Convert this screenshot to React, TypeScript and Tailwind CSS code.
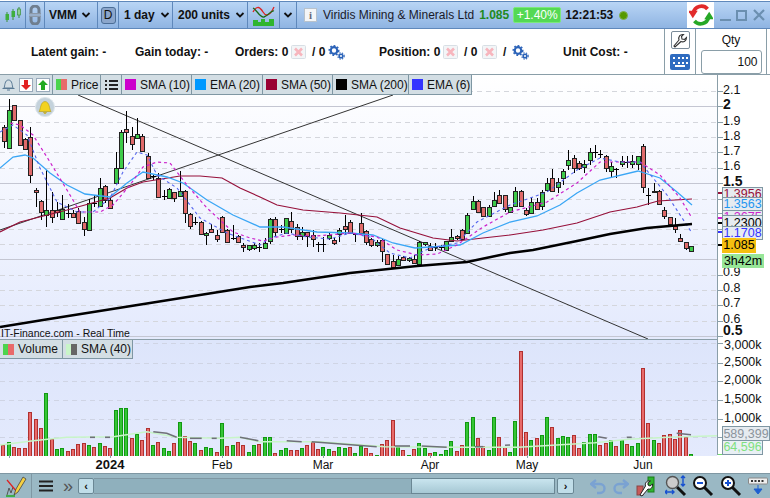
import React from "react";

type C = [number, number, number, number, number, number];
const g1: C[] = [[13,90,160,95,138,0],[28,13,160,45,160,1],[43,30,75,30,75,0],[61,75,150,75,150,0],[76,130,165,133,163,0],[91,95,265,127,240,0],[109,278,335,286,292,0],[124,315,375,317,352,0],[139,225,395,344,360,1],[156,290,385,345,365,0],[172,320,365,345,352,0],[187,300,375,343,373,1],[205,328,370,355,355,2],[220,345,370,355,365,0],[235,340,385,348,383,0],[252,365,422,382,403,0],[268,312,407,323,406,1],[283,300,335,325,325,2],[301,248,335,278,333,1],[316,270,325,274,315,0],[331,310,340,315,340,0],[349,172,265,218,265,1],[364,105,220,112,220,1],[379,48,145,103,112,0],[397,95,165,122,148,0],[412,70,128,118,128,1],[427,118,170,122,168,0],[445,175,250,182,250,0],[460,240,255,243,243,2],[475,235,305,250,305,0],[493,285,315,303,303,2],[508,280,310,283,308,1],[523,290,320,292,310,0],[541,228,305,287,304,1],[556,285,383,287,355,0],[571,355,403,358,394,0],[586,365,390,380,380,2],[604,378,420,382,418,0],[619,410,450,415,421,1],[634,388,415,403,410,0],[652,405,440,421,431,0],[667,363,410,365,412,0],[682,403,443,404,442,0],[700,390,435,428,428,2],[715,420,445,424,440,0],[730,445,470,451,457,0],[748,450,468,451,457,1]];
const g2: C[] = [[-2,345,362,346,356,1],[13,340,360,344,355,1],[28,340,365,350,350,2],[46,325,357,338,355,1],[61,265,342,268,332,1],[76,262,320,266,305,0],[94,285,310,297,297,2],[109,263,310,265,308,1],[124,246,310,273,298,0],[142,282,330,292,317,0],[157,290,330,307,317,1],[172,305,350,307,318,0],[190,300,352,316,328,0],[205,335,365,342,342,2],[220,320,365,341,341,2],[238,305,330,316,325,1],[253,325,345,331,340,0],[268,295,335,301,313,1],[286,254,315,287,296,0],[301,270,310,277,308,0],[316,310,335,312,312,2],[334,250,310,280,308,0],[349,300,345,302,337,0],[364,325,350,328,344,0],[382,330,352,337,346,1],[397,328,395,329,364,0],[412,373,403,373,403,0],[430,375,413,392,412,0],[445,378,405,388,406,1],[460,378,392,380,390,0],[478,380,395,385,390,1],[493,375,400,388,398,0],[508,333,405,335,403,1],[526,335,347,335,343,1],[541,340,362,347,360,0],[556,340,362,352,352,2],[574,345,360,352,352,2],[589,333,362,334,361,1],[604,298,335,320,332,1],[622,315,330,317,325,0],[637,297,330,301,328,0],[652,250,310,256,310,1],[670,197,240,214,238,1],[685,210,247,212,245,0],[700,230,258,230,257,0],[718,225,258,230,257,1],[733,185,232,211,229,1],[748,180,220,196,218,0],[766,195,245,196,238,0]];
const g3: C[] = [[0,335,355,335,352,1],[16,275,335,287,333,1],[34,285,335,287,333,0],[49,340,362,344,356,0],[64,310,358,322,355,1],[82,310,345,322,343,0],[97,285,345,290,333,1],[112,250,290,263,285,1],[127,222,290,248,288,0],[145,250,295,260,277,1],[160,222,270,227,248,1],[175,165,225,195,209,1],[193,180,235,190,220,0],[208,197,225,203,219,0],[223,195,233,206,217,1],[241,160,210,170,196,1],[256,150,190,172,172,2],[271,165,190,178,178,2],[289,180,230,182,220,0],[304,200,250,214,228,1],[319,220,250,222,222,2],[337,182,215,197,208,1],[352,182,220,202,202,2],[367,180,220,197,207,1],[385,182,225,184,208,1],[400,148,295,154,276,0],[415,280,330,300,300,2],[433,265,295,287,292,0],[448,285,330,287,328,0],[463,335,372,344,364,0],[481,365,388,365,386,0],[496,370,415,392,403,0],[511,418,442,430,439,0],[529,442,465,442,458,0],[544,453,470,454,468,1]];
const candles = [
  ...g1.map((c) => ({ x: c[0] / 3, c, ox: 95 })),
  ...g2.map((c) => ({ x: 250 + c[0] / 3, c, ox: 130 })),
  ...g3.map((c) => ({ x: 510 + c[0] / 3, c, ox: 95 })),
];
const v1: [number, number, number][] = [[10,375,0],[27,367,1],[42,380,0],[58,385,0],[74,385,0],[90,277,0],[107,297,0],[122,325,0],[138,220,1],[155,358,0],[170,388,1],[186,385,1],[203,393,0],[219,388,0],[234,373,0],[251,370,0],[266,376,1],[282,382,0],[300,370,1],[315,378,0],[330,385,0],[348,271,1],[363,265,1],[378,265,1],[395,355,0],[411,343,1],[426,360,0],[443,325,0],[459,376,1],[474,367,0],[491,385,1],[506,393,1],[522,370,0],[539,307,1],[554,349,0],[570,363,0],[585,370,1],[603,390,0],[618,382,1],[633,385,1],[651,396,0],[666,310,1],[681,378,0],[698,376,1],[714,367,0],[729,376,0],[746,397,1],[762,376,1],[777,373,0],[795,352,1],[810,352,1],[825,400,0],[843,391,1],[858,385,1],[873,391,0],[890,391,0],[905,385,1],[921,376,0],[938,367,0],[953,388,0],[969,382,1],[986,388,1],[1001,394,0],[1017,382,1],[1035,385,1],[1050,382,0],[1065,400,1],[1083,378,1],[1098,385,0],[1113,400,0],[1130,406,1],[1146,373,0],[1160,360,0],[1179,300,0],[1193,380,1],[1209,391,0],[1226,406,1],[1242,388,0],[1257,370,1],[1275,385,1],[1290,400,0],[1305,397,1],[1323,403,1],[1338,391,1],[1353,364,1],[1371,394,0],[1386,376,0],[1401,307,1],[1419,292,1],[1434,355,0],[1449,379,0],[1467,391,1],[1482,292,1],[1497,352,0],[1515,382,0],[1530,397,1],[1545,304,1],[1563,94,0],[1578,337,0],[1593,361,1],[1611,355,0],[1626,346,1],[1641,292,1],[1656,322,0],[1674,355,1],[1689,349,1],[1704,352,1],[1722,346,0],[1737,385,0],[1752,367,1],[1770,343,1],[1785,343,1],[1800,376,0],[1818,370,0],[1833,361,1],[1848,379,0],[1866,361,1],[1881,373,0],[1896,379,1],[1914,370,1],[1929,145,0],[1944,310,0],[1962,361,1],[1977,370,0],[1992,346,0],[2010,343,0],[2025,358,0],[2040,331,0],[2058,352,0],[2073,403,1]];

const ema20 = "0,168 13,157 25,155 33,158 50,173 67,185 85,194 110,197 127,183 143,172 167,177 183,183 207,200 233,215 260,227 283,227 317,232 350,233 373,235 393,243 415,248 430,247 460,245 483,233 510,222 537,216 560,205 577,193 600,180 638,171 660,178 677,192 692,205";
const sma50 = "0,232 20,222 67,210 110,198 127,188 143,182 180,176 200,176 222,178 240,188 260,197 277,205 303,210 340,213 377,217 400,228 433,238 457,241 483,238 510,235 543,230 577,223 610,212 637,207 658,201 692,199";
const sma200 = "0,327 43,320 150,303 250,287 283,283 350,273 417,266 467,262 510,253 533,250 577,241 610,234 647,228 692,224";
const sma10 = "10,123 20,125 33,135 50,162 70,195 80,212 100,212 113,205 130,185 143,167 157,162 170,163 187,185 207,208 233,232 250,238 263,241 277,237 293,235 317,236 350,233 377,237 397,250 417,255 437,254 457,245 483,227 510,212 547,202 577,183 600,162 620,162 640,162 660,175 680,198 692,218";
const ema6 = "0,132 13,125 27,135 40,168 57,202 77,212 93,212 110,198 123,172 137,152 147,155 157,175 177,188 200,218 227,233 260,245 270,238 287,233 307,237 330,239 350,233 370,237 390,253 410,258 430,248 457,243 477,222 510,205 547,192 577,170 600,158 620,162 640,162 667,195 692,233";

const toV = (a: number[][]) => a.map(([x, y]) => `${(x / 3).toFixed(1)},${(320 + y / 3).toFixed(1)}`).join(" ");
const volMa = toV([[0,375],[100,362],[200,352],[340,350],[440,335],[530,352],[660,355],[720,352],[780,365],[960,365],[1155,380],[1385,382],[1555,382],[1785,368],[1885,358],[2005,352],[2155,347],[2285,340],[2303,344]]);
const volGray = [[[270,352],[285,352]],[[315,352],[330,352]],[[460,335],[500,340],[530,352]],[[570,355],[605,355]],[[635,355],[650,355]],[[720,352],[775,362]],[[860,362],[905,365]],[[935,365],[1130,380]],[[1185,378],[1230,378]],[[1265,378],[1340,382]],[[1425,380],[1450,380]],[[1515,376],[1530,375]],[[1795,350],[1820,355]],[[1880,352],[1895,352]],[[2030,340],[2073,344]]];

const priceAxis: [string, number, boolean][] = [["2.1",90,false],["2",104,true],["1.9",121,false],["1.8",136,false],["1.7",151,false],["1.6",166,false],["1.5",181,true],["0.9",272,false],["0.8",288,false],["0.7",303,false],["0.6",319,false],["0.5",330,true]];
const priceTicks = [91,106,122,137,152,168,183,199,213,229,244,275,290,305,321,336];
const volAxis: [string, number][] = [["3,000k",345],["2,500k",362],["2,000k",380],["1,500k",399],["1,000k",418]];
const volTicks = [343,363,381,400,419,437];
const months: [string, number, boolean][] = [["2024",110,true],["Feb",222,false],["Mar",323,false],["Apr",430,false],["May",527,false],["Jun",643,false]];

const tag = "absolute left-[4px] bg-[#e6ebf0] border border-[#7f97a3] text-[12.5px] leading-[13px] text-center overflow-hidden";

function Chev() {
  return <svg width="10" height="8" viewBox="0 0 10 8"><path d="M1.5 2 5 5.5 8.5 2" fill="none" stroke="#111" strokeWidth="1.8" /></svg>;
}
function Gears() {
  return (
    <svg width="17" height="15" viewBox="0 0 17 15" className="shrink-0">
      <circle cx="6" cy="5.5" r="3.3" fill="none" stroke="#2a62b8" strokeWidth="2.2" />
      <circle cx="6" cy="5.5" r="4.8" fill="none" stroke="#2a62b8" strokeWidth="1.4" strokeDasharray="1.8 1.8" />
      <circle cx="13" cy="11" r="1.8" fill="none" stroke="#2a62b8" strokeWidth="1.6" />
      <circle cx="13" cy="11" r="3.2" fill="none" stroke="#2a62b8" strokeWidth="1.1" strokeDasharray="1.3 1.3" />
    </svg>
  );
}
function DocX() {
  return (
    <svg width="15" height="14" viewBox="0 0 15 14" className="shrink-0">
      <rect x="0.5" y="0.5" width="14" height="13" rx="1" fill="#f3f5f7" stroke="#d8dfe5" />
      <path d="M4 3.5 11 10.5M11 3.5 4 10.5" stroke="#f7b5bd" strokeWidth="2.6" />
    </svg>
  );
}
function Sep() {
  return <div className="w-px h-full bg-[#5f88bb] shrink-0" />;
}
function Swatch({ c }: { c: string }) {
  return <span className={`w-[11px] h-[11px] shrink-0 ${c}`} />;
}
function Chip({ color, label, w }: { color: string; label: string; w: string }) {
  return (
    <div className={`flex items-center gap-[4px] pl-[3px] h-full whitespace-nowrap border-r border-[#7f97a3] ${w}`}>
      <Swatch c={color} />
      <span>{label}</span>
    </div>
  );
}
function Mag({ children }: { children?: React.ReactNode }) {
  return (
    <svg width="22" height="22" viewBox="0 0 22 22" className="shrink-0">
      <path d="M12 12 20 20" stroke="#111" strokeWidth="3" />
      <circle cx="8" cy="8" r="6" fill="#fff" stroke="#111" strokeWidth="2" />
      {children}
    </svg>
  );
}

export default function App() {
  return (
    <div className="w-[770px] h-[498px] overflow-hidden bg-white flex flex-col text-[12px] text-[#111] [font-family:'Liberation_Sans',sans-serif]">
      <div className="h-[1px] shrink-0 bg-white" />
      {/* Title bar */}
      <div className="h-[28px] shrink-0 flex items-center bg-linear-to-b from-[#b9d5f5] to-[#8fb4e2] border-y border-[#5f88bb]">
        <div className="w-[25px] flex justify-center shrink-0">
          <svg width="18" height="18" viewBox="0 0 18 18">
            <path d="M3 6V16M9 3V14M15 1V12" stroke="#3a8f3a" strokeWidth="1" />
            <rect x="1.5" y="8" width="3.5" height="6" fill="#3fae3f" />
            <rect x="7.5" y="5" width="3.5" height="6" fill="#3fae3f" />
            <rect x="13.5" y="3" width="3" height="6" fill="#8fd08f" stroke="#3a8f3a" strokeWidth=".7" />
          </svg>
        </div>
        <Sep />
        <div className="w-[18px] flex justify-center shrink-0">
          <svg width="12" height="20" viewBox="0 0 12 20">
            <path d="M2 8V5a4 4 0 0 1 8 0v3" fill="none" stroke="#6f7e8f" strokeWidth="3" />
            <path d="M2 12v3a4 4 0 0 0 8 0v-3" fill="none" stroke="#6f7e8f" strokeWidth="3" />
            <rect x="0" y="8" width="12" height="1.5" fill="#8b98a8" />
            <rect x="0" y="10.5" width="12" height="1.5" fill="#8b98a8" />
          </svg>
        </div>
        <Sep />
        <div className="w-[52px] flex items-center gap-[4px] pl-[4px] font-bold shrink-0">VMM <Chev /></div>
        <Sep />
        <div className="w-[20px] flex justify-center shrink-0">
          <div className="w-[15px] h-[17px] rounded-[3px] bg-[#8ba6cb] border border-[#4b6d96] flex items-center justify-center text-[12px] leading-none">D</div>
        </div>
        <Sep />
        <div className="w-[53px] flex items-center gap-[5px] pl-[5px] font-bold shrink-0">1 day <Chev /></div>
        <Sep />
        <div className="w-[74px] flex items-center gap-[5px] pl-[5px] font-bold shrink-0">200 units <Chev /></div>
        <Sep />
        <div className="w-[31px] flex justify-center shrink-0">
          <svg width="23" height="22" viewBox="0 0 23 22">
            <path d="M1 8C5 1 8 3 11 8S18 12 22 3" fill="none" stroke="#d22" strokeWidth="1.3" />
            <path d="M1 4C5 6 8 14 12 13S19 6 22 7" fill="none" stroke="#196b19" strokeWidth="1.3" />
            <path d="M1 22V16H6V18H9V15H13V18H17V15H22V22Z" fill="#2fb52f" />
          </svg>
        </div>
        <Sep />
        <div className="w-[16px] flex justify-center shrink-0"><Chev /></div>
        <Sep />
        <div className="flex items-center pl-[7px] w-[390px] shrink-0">
          <div className="w-[13px] h-[14px] bg-[#f4f6f8] border border-[#b8c2cc] flex items-center justify-center text-[11px] font-bold text-[#667] leading-none [font-family:'Liberation_Serif',serif] shrink-0">i</div>
          <span className="ml-[6px] text-[#1a1a2a]">Viridis Mining &amp; Minerals Ltd</span>
          <span className="ml-[5px] font-bold text-[#1f8a1f]">1.085</span>
          <span className="ml-[4px] w-[48px] h-[16px] rounded-[2px] bg-[#54d954] border border-[#7ce87c] text-white flex items-center justify-center leading-none">+1.40%</span>
          <span className="ml-[4px] font-bold">12:21:53</span>
          <span className="ml-[6px] w-[9px] h-[9px] rounded-full bg-[#559900] border border-[#80b050]" />
        </div>
        <div className="w-[27px] h-full bg-white flex items-center justify-center shrink-0 ml-auto">
          <svg width="24" height="24" viewBox="0 0 22 22">
            <path d="M17 5.5A7.5 7.5 0 0 0 4 9" fill="none" stroke="#e22b2b" strokeWidth="3.4" />
            <path d="M-1 7H8L3.5 14Z" fill="#e22b2b" />
            <path d="M5 16.5A7.5 7.5 0 0 0 18 13" fill="none" stroke="#26a826" strokeWidth="3.4" />
            <path d="M14 15H23L18.5 8Z" fill="#26a826" />
          </svg>
        </div>
        <div className="w-[57px] flex items-center justify-around px-[3px] shrink-0">
          <div className="w-[11px] h-[2px] bg-[#6b8fb0] mt-[10px]" />
          <div className="w-[11px] h-[11px] border-2 border-[#6b8fb0]" />
          <svg width="12" height="12" viewBox="0 0 12 12"><path d="M1 1 11 11M11 1 1 11" stroke="#6b8fb0" strokeWidth="2.2" /></svg>
        </div>
      </div>

      {/* Info row */}
      <div className="h-[46px] shrink-0 flex border-b border-[#8a9ea8] font-bold">
        <div className="w-[664px] shrink-0 flex items-center pl-[31px] whitespace-nowrap pt-[1px]">
          <span className="w-[104px]">Latent gain: -</span>
          <span className="w-[100px]">Gain today: -</span>
          <span className="w-[56px]">Orders: 0</span>
          <DocX />
          <span className="ml-[6px] w-[16px]">/ 0</span>
          <Gears />
          <span className="ml-[34px] w-[64px]">Position: 0</span>
          <DocX />
          <span className="ml-[6px] w-[18px]">/ 0</span>
          <DocX />
          <span className="ml-[6px] w-[9px]">/</span>
          <Gears />
          <span className="ml-[34px]">Unit Cost: -</span>
        </div>
        <div className="w-[32px] shrink-0 border-x border-[#8a9ea8] flex flex-col items-center gap-[5px] pt-[2px]">
          <div className="w-[19px] h-[18px] rounded-[2px] border border-[#7a8a98] flex items-center justify-center">
            <svg width="15" height="15" viewBox="0 0 15 15"><path d="M1 13 2 14 8 8.5C10.5 9.5 13.5 8 13.5 4.5L11.5 6.5 9 6 8.5 3.5 10.5 1.5C7 1 5 4 6 7Z" fill="#fff" stroke="#333" strokeWidth="1.1" /></svg>
          </div>
          <div className="w-[20px] h-[16px] rounded-[2px] bg-[#2f6cc0] flex flex-col items-center justify-center gap-[1px]">
            <div className="w-[15px] h-[7px] border-t-2 border-b-2 border-dotted border-white" />
            <div className="w-[10px] h-[2px] bg-white" />
          </div>
        </div>
        <div className="w-[71px] shrink-0 border-r border-[#8a9ea8] flex flex-col items-center font-normal">
          <div className="h-[21px] flex items-center">Qty</div>
          <div className="w-[61px] h-[24px] rounded-[3px] border border-[#8a9ea8] flex items-center justify-end pr-[3px]">100</div>
        </div>
      </div>

      {/* Chart */}
      <div className="flex shrink-0 h-[380px]">
        <div className="w-[717px] shrink-0 flex flex-col border-r border-[#8a9ea8] box-content">
          <div className="relative h-[264px] shrink-0 border-b border-[#8a9ea8] box-content bg-linear-to-b from-white to-[#e4eafd]">
            <svg width="717" height="264" viewBox="0 75 717 264" className="block">
              {[91,122,137,152,168,199,213,229,244,275,290,305,321].map((y) => (
                <line key={y} x1="0" x2="717" y1={y + 0.5} y2={y + 0.5} stroke="#d4d6dc" strokeDasharray="5 4" />
              ))}
              {[106,183,259,336].map((y) => (
                <line key={y} x1="0" x2="717" y1={y + 0.5} y2={y + 0.5} stroke="#c4c6d2" />
              ))}
              <line x1="78" y1="95" x2="648" y2="339" stroke="#333" strokeWidth="1" />
              <line x1="0" y1="230" x2="393" y2="95" stroke="#333" strokeWidth="1" />
              <g shapeRendering="crispEdges">
                {candles.map(({ x, c, ox }, i) => {
                  const px = Math.round(x);
                  const yy = (v: number) => Math.round(ox + v / 3);
                  const t = yy(c[3]);
                  const b = yy(c[4]);
                  return (
                    <g key={i}>
                      <line x1={px + 0.5} x2={px + 0.5} y1={yy(c[1])} y2={yy(c[2])} stroke="#000" />
                      {c[5] === 2 ? (
                        <line x1={px - 2} x2={px + 3} y1={t + 0.5} y2={t + 0.5} stroke="#000" />
                      ) : (
                        <rect x={px - 1.5} y={t + 0.5} width="4" height={Math.max(b - t, 1)} fill={c[5] ? "#3ecb4a" : "#e06a6a"} stroke="#222" />
                      )}
                    </g>
                  );
                })}
              </g>
              <polyline points={sma50} fill="none" stroke="#96103a" strokeWidth="1.2" />
              <polyline points={ema20} fill="none" stroke="#3aa6f5" strokeWidth="1.3" />
              <polyline points={sma10} fill="none" stroke="#cc22cc" strokeWidth="1.2" strokeDasharray="3 3" />
              <polyline points={ema6} fill="none" stroke="#5566ee" strokeWidth="1.1" strokeDasharray="3 3" />
              <polyline points={sma200} fill="none" stroke="#000" strokeWidth="2.6" />
            </svg>
            {/* Legend */}
            <div className="absolute left-0 top-0 h-[20px] w-[472px] flex items-center bg-[#d3dee4] border-b border-r border-[#7f97a3]">
              <div className="w-[53px] h-full shrink-0 flex items-center gap-[1px] pl-[1px] border-r border-[#7f97a3]">
                <svg width="15" height="15" viewBox="0 0 15 15"><path d="M3 11C4 9 3.5 3 7.5 3S11 9 12 11ZM1.5 11.5H13.5M6 13H9" fill="none" stroke="#5a7a95" strokeWidth="1" /></svg>
                <svg width="14" height="14" viewBox="0 0 14 14" className="ml-[2px]">
                  <rect x=".5" y=".5" width="13" height="13" fill="#fff" stroke="#99aabb" />
                  <path d="M5 2H9V7H12L7 12 2 7H5Z" fill="#e22222" />
                </svg>
                <svg width="14" height="14" viewBox="0 0 14 14" className="ml-[2px]">
                  <rect x=".5" y=".5" width="13" height="13" fill="#fff" stroke="#99aabb" />
                  <path d="M5 12H9V7H12L7 2 2 7H5Z" fill="#22aa22" />
                </svg>
              </div>
              <div className="w-[48px] h-full shrink-0 flex items-center pl-[3px] gap-[4px] border-r border-[#7f97a3]">
                <span className="flex shrink-0"><span className="w-[5px] h-[11px] bg-[#4cd44c]" /><span className="w-[6px] h-[11px] bg-[#e86a6a]" /></span>
                <span>Price</span>
              </div>
              <div className="w-[21px] h-full shrink-0 flex items-center justify-center border-r border-[#7f97a3]">
                <svg width="13" height="10" viewBox="0 0 13 10"><path d="M0 1H2M4 1H13M0 5H2M4 5H13M0 9H2M4 9H13" stroke="#222" strokeWidth="1.8" /></svg>
              </div>
              <Chip color="bg-[#cc00cc]" label="SMA (10)" w="w-[70px] shrink-0" />
              <Chip color="bg-[#0099ff]" label="EMA (20)" w="w-[71px] shrink-0" />
              <Chip color="bg-[#990033]" label="SMA (50)" w="w-[70px] shrink-0" />
              <Chip color="bg-black" label="SMA (200)" w="w-[76px] shrink-0" />
              <Chip color="bg-[#3333ff]" label="EMA (6)" w="w-[63px] shrink-0 border-r-0" />
            </div>
            {/* Bell */}
            <div className="absolute left-[35px] top-[22px] w-[20px] h-[20px] rounded-full bg-[#c4d2dc] border border-[#dde5ea] flex items-center justify-center">
              <svg width="16" height="16" viewBox="0 0 16 16"><path d="M2 12.5C4 10 3 3 8 2.5 13 3 12 10 14 12.5ZM6.5 13.5A1.6 1.6 0 0 0 9.5 13.5Z" fill="#f2d21f" stroke="#b59a10" strokeWidth=".6" /></svg>
            </div>
            <div className="absolute left-[1px] bottom-[-1px] text-[10.5px] leading-[14px] h-[14px]">IT-Finance.com - Real Time</div>
          </div>
          <div className="relative flex-1 bg-linear-to-b from-[#dde5fb] to-[#e4eafd]">
            <svg width="717" height="116" viewBox="0 340 717 116" className="block">
              {volTicks.map((y) => (
                <line key={y} x1="0" x2="717" y1={y + 0.5} y2={y + 0.5} stroke="#cfd4e4" strokeDasharray="5 4" />
              ))}
              {v1.map(([zx, top, up], i) => {
                const px = Math.round(zx / 3);
                const t = Math.round(320 + top / 3);
                return <rect key={i} shapeRendering="crispEdges" x={px - 1.5} y={t + 0.5} width="3" height={456 - t} fill={up ? "#35c535" : "#e86a6a"} stroke={up ? "#119911" : "#b03030"} />;
              })}
              <polyline points={volMa} fill="none" stroke="#c8f5c8" strokeWidth="1.6" />
              {volGray.map((s, i) => (
                <polyline key={i} points={toV(s)} fill="none" stroke="#6f7078" strokeWidth="1.6" />
              ))}
            </svg>
            <div className="absolute left-0 top-0 h-[19px] flex items-center bg-[#d3dee4] border-b border-r border-[#7f97a3]">
              <div className="w-[63px] h-full flex items-center gap-[4px] pl-[3px] border-r border-[#7f97a3]">
                <span className="flex shrink-0"><span className="w-[5px] h-[11px] bg-[#4cd44c]" /><span className="w-[6px] h-[11px] bg-[#e86a6a]" /></span>
                <span>Volume</span>
              </div>
              <div className="w-[69px] h-full flex items-center gap-[4px] pl-[3px]">
                <span className="flex shrink-0"><span className="w-[5px] h-[11px] bg-[#c8f5c8]" /><span className="w-[6px] h-[11px] bg-[#666]" /></span>
                <span>SMA (40)</span>
              </div>
            </div>
          </div>
        </div>
        {/* Axis */}
        <div className="relative flex-1">
          {priceTicks.map((y) => (
            <div key={y} className="absolute left-0 w-[5px] h-px bg-[#8a9ea8]" style={{ top: y - 75 }} />
          ))}
          {priceAxis.map(([t, y, b]) => (
            <span key={t} className={`absolute left-[5px] leading-[14px] ${b ? "font-bold text-[14px]" : "text-[12.5px]"}`} style={{ top: y - 82 }}>{t}</span>
          ))}
          {volTicks.map((y) => (
            <div key={y} className="absolute left-0 w-[5px] h-px bg-[#8a9ea8]" style={{ top: y - 75 }} />
          ))}
          {volAxis.map(([t, y]) => (
            <span key={t} className="absolute left-[6px] leading-[14px] text-[12.5px]" style={{ top: y - 82 }}>{t}</span>
          ))}
          <div className="absolute left-0 top-[117px] w-[4px] h-[2px] bg-[#96103a]" />
          <div className="absolute left-0 top-[142px] w-[4px] h-[2px] bg-[#cc22cc]" />
          <div className="absolute left-0 top-[147px] w-[4px] h-[2px] bg-black" />
          <div className="absolute left-0 top-[156px] w-[4px] h-[2px] bg-[#3333ff]" />
          <div className="absolute left-0 top-[169px] w-[4px] h-[2px] bg-black" />
          <div className={`${tag} top-[112px] w-[41px] h-[14px] text-[#96103a]`}>1.3956</div>
          <div className={`${tag} top-[122px] w-[41px] h-[14px] text-[#1f96f0]`}>1.3563</div>
          <div className={`${tag} top-[135px] w-[41px] h-[14px] text-[#cc22cc]`}>1.2675</div>
          <div className={`${tag} top-[140px] w-[41px] h-[14px] text-black pt-[1px]`}>1.2300</div>
          <div className={`${tag} top-[151px] w-[41px] h-[14px] text-[#3333ff]`}>1.1708</div>
          <div className="absolute left-[4px] top-[163px] w-[34px] h-[15px] bg-[#f5bf10] text-black text-[12.5px] leading-[15px] text-center">1.085</div>
          <div className="absolute left-[4px] top-[179px] w-[42px] h-[14px] bg-[#98e698] text-black text-[12.5px] leading-[14px] text-center">3h42m</div>
          <div className="absolute left-[4px] top-[351px] w-[48px] h-[15px] bg-[#e6ebf0] border border-[#7f97a3] text-[#8b949c] text-[12.5px] leading-[14px] text-center">589,399</div>
          <div className="absolute left-[4px] top-[366px] w-[41px] h-[14px] bg-[#e9f0f5] border-x border-b border-[#7f97a3] text-[#7fe07f] text-[12.5px] leading-[13px] text-center">64,596</div>
          <div className="absolute left-0 top-[379px] w-[4px] h-px bg-[#6fdc6f]" />
        </div>
      </div>

      {/* X axis */}
      <div className="relative h-[18px] shrink-0">
        {[9, ...months.map((m) => m[1])].map((x) => (
          <div key={x} className="absolute top-0 w-px h-[3px] bg-[#8a9ea8]" style={{ left: x }} />
        ))}
        {months.map(([t, x, b]) => (
          <span key={t} className={`absolute top-[3px] w-[50px] text-center leading-[14px] ${b ? "font-bold text-[13px]" : "text-[12px]"}`} style={{ left: x - 25 }}>{t}</span>
        ))}
      </div>

      {/* Bottom toolbar */}
      <div className="flex-1 flex items-center bg-[#9ab8c4] border-t border-[#7f97a3]">
        <div className="w-[32px] h-full shrink-0 border-r border-[#7f97a3] flex items-center justify-center">
          <svg width="22" height="22" viewBox="0 0 22 22">
            <path d="M2 20 4 13 6 18 8 12" fill="none" stroke="#555" strokeWidth="1" />
            <path d="M2 5 12 17" stroke="#e02020" strokeWidth="1.2" />
            <path d="M9 20 11 14 18 2 21 4 13 17Z" fill="#f5d040" stroke="#444" strokeWidth=".8" />
            <path d="M1 21H10" stroke="#22aa22" strokeWidth="1.5" />
          </svg>
        </div>
        <div className="w-[27px] shrink-0 flex justify-center">
          <svg width="14" height="12" viewBox="0 0 14 12"><path d="M0 1.5H14M0 6H14M0 10.5H14" stroke="#222" strokeWidth="2.2" /></svg>
        </div>
        <span className="w-[19px] shrink-0 pl-[4px] text-[18px] text-[#555] leading-none">»</span>
        <div className="w-[16px] h-[16px] shrink-0 rounded-[2px] bg-[#c0dde8] border border-[#6a8794] flex items-center justify-center text-[11px] font-bold leading-none">‹</div>
        <div className="w-[317px] h-[16px] shrink-0 bg-[#8fb0bd] border-y border-[#7f97a3]" />
        <div className="w-[144px] h-[16px] shrink-0 bg-linear-to-b from-[#c9e5ef] to-[#a6c8d4] border border-[#6a8794]" />
        <div className="w-[17px] h-[16px] shrink-0 ml-[2px] rounded-[2px] bg-[#c0dde8] border border-[#6a8794] flex items-center justify-center text-[11px] font-bold leading-none">›</div>
        <div className="flex items-center ml-[16px] gap-[3px]">
          <svg width="18" height="18" viewBox="0 0 18 18"><path d="M6 3 1 7 6 11M1.5 7H10A4.5 4.5 0 0 1 10 16H7" fill="none" stroke="#7aa2d2" strokeWidth="2.4" /></svg>
          <svg width="18" height="18" viewBox="0 0 18 18"><path d="M12 3 17 7 12 11M16.5 7H8A4.5 4.5 0 0 0 8 16H11" fill="none" stroke="#7aa2d2" strokeWidth="2.4" /></svg>
          <svg width="20" height="22" viewBox="0 0 20 22" className="ml-[4px]">
            <rect x="1" y="11" width="6" height="9" fill="#c85a5a" stroke="#884444" />
            <rect x="12" y="2" width="6" height="15" fill="#2fb52f" stroke="#1a7a1a" />
            <path d="M4 20 6 21 12 14C15 15 17 12 16.5 9L14 11 12 10 12 7.5 14.5 6C11 5 8.5 8 9.5 11Z" fill="#fff" stroke="#222" strokeWidth="1" />
          </svg>
          <div className="ml-[6px] flex">
            <svg width="22" height="22" viewBox="0 0 22 22">
              <path d="M12 12 20 20" stroke="#111" strokeWidth="3" />
              <circle cx="7.5" cy="7.5" r="6" fill="#ccc" stroke="#555" strokeWidth="1.4" />
              <path d="M18 1V11M16 3 18 1 20 3M16 9 18 11 20 9" fill="none" stroke="#1650d0" strokeWidth="1.4" />
              <path d="M0 17H9M2 15 0 17 2 19M7 15 9 17 7 19" fill="none" stroke="#1650d0" strokeWidth="1.4" />
            </svg>
          </div>
          <div className="ml-[2px] flex"><Mag><path d="M5 8H11" stroke="#1650d0" strokeWidth="2" /></Mag></div>
          <div className="ml-[3px] flex"><Mag><path d="M5 8H11M8 5V11" stroke="#1650d0" strokeWidth="2" /></Mag></div>
          <svg width="20" height="20" viewBox="0 0 20 20" className="ml-[3px]">
            <rect x="0.5" y="2" width="19" height="6" rx="1" fill="#eeeeee" stroke="#888888" />
            <path d="M3 5H17" stroke="#333" strokeWidth="2" strokeDasharray="2 1.5" />
            <path d="M10 9V15M6 13 10 18 14 13Z" fill="#1e5fd0" stroke="#1e5fd0" />
          </svg>
        </div>
      </div>
    </div>
  );
}
